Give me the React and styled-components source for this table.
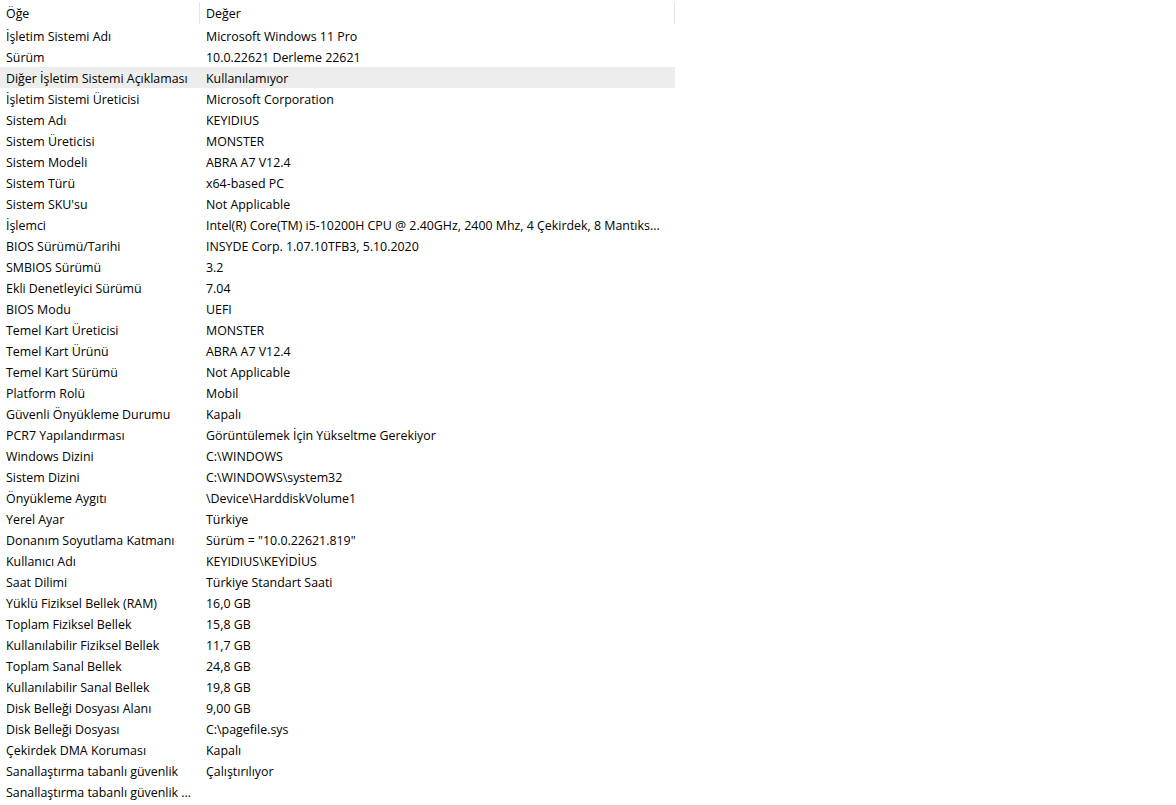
import React from "react";
import styled, { createGlobalStyle } from "styled-components";

const rows = [
  ["İşletim Sistemi Adı", "Microsoft Windows 11 Pro"],
  ["Sürüm", "10.0.22621 Derleme 22621"],
  ["Diğer İşletim Sistemi Açıklaması", "Kullanılamıyor"],
  ["İşletim Sistemi Üreticisi", "Microsoft Corporation"],
  ["Sistem Adı", "KEYIDIUS"],
  ["Sistem Üreticisi", "MONSTER"],
  ["Sistem Modeli", "ABRA A7 V12.4"],
  ["Sistem Türü", "x64-based PC"],
  ["Sistem SKU'su", "Not Applicable"],
  ["İşlemci", "Intel(R) Core(TM) i5-10200H CPU @ 2.40GHz, 2400 Mhz, 4 Çekirdek, 8 Mantıks..."],
  ["BIOS Sürümü/Tarihi", "INSYDE Corp. 1.07.10TFB3, 5.10.2020"],
  ["SMBIOS Sürümü", "3.2"],
  ["Ekli Denetleyici Sürümü", "7.04"],
  ["BIOS Modu", "UEFI"],
  ["Temel Kart Üreticisi", "MONSTER"],
  ["Temel Kart Ürünü", "ABRA A7 V12.4"],
  ["Temel Kart Sürümü", "Not Applicable"],
  ["Platform Rolü", "Mobil"],
  ["Güvenli Önyükleme Durumu", "Kapalı"],
  ["PCR7 Yapılandırması", "Görüntülemek İçin Yükseltme Gerekiyor"],
  ["Windows Dizini", "C:\\WINDOWS"],
  ["Sistem Dizini", "C:\\WINDOWS\\system32"],
  ["Önyükleme Aygıtı", "\\Device\\HarddiskVolume1"],
  ["Yerel Ayar", "Türkiye"],
  ["Donanım Soyutlama Katmanı", "Sürüm = \"10.0.22621.819\""],
  ["Kullanıcı Adı", "KEYIDIUS\\KEYİDİUS"],
  ["Saat Dilimi", "Türkiye Standart Saati"],
  ["Yüklü Fiziksel Bellek (RAM)", "16,0 GB"],
  ["Toplam Fiziksel Bellek", "15,8 GB"],
  ["Kullanılabilir Fiziksel Bellek", "11,7 GB"],
  ["Toplam Sanal Bellek", "24,8 GB"],
  ["Kullanılabilir Sanal Bellek", "19,8 GB"],
  ["Disk Belleği Dosyası Alanı", "9,00 GB"],
  ["Disk Belleği Dosyası", "C:\\pagefile.sys"],
  ["Çekirdek DMA Koruması", "Kapalı"],
  ["Sanallaştırma tabanlı güvenlik", "Çalıştırılıyor"],
  ["Sanallaştırma tabanlı güvenlik ...", ""],
];

const GlobalStyle = createGlobalStyle`
  html, body {
    margin:0;
    padding:0;
    background:#fff;
  }
  body {
    font-family:"Open Sans","Noto Sans",sans-serif;
    font-size:12.4px;
    color:#000;
    overflow:hidden;
  }
`;

const List = styled.div`
  width:675px;
  display:flex;
  flex-direction:column;
`;

const Header = styled.div`
  display:grid;
  grid-template-columns:200px 475px;
  height:25px;
`;

const HeaderCell = styled.div`
  display:flex;
  align-items:center;
  padding:2px 0 0 6px;
  position:relative;
  &::after{
    content:"";
    position:absolute;
    right:0;
    top:2px;
    bottom:1px;
    width:1px;
    background:#e5e5e5;
  }
`;

const Row = styled.div`
  display:grid;
  grid-template-columns:200px 475px;
  height:21px;
  background:${p => (p.selected ? "#ededed" : "transparent")};
`;

const Cell = styled.div`
  display:flex;
  align-items:center;
  padding:2px 0 0 6px;
  white-space:nowrap;
`;

export default function App(){
  return(
    <>
      <GlobalStyle/>
      <List>
        <Header>
          <HeaderCell>Öğe</HeaderCell>
          <HeaderCell>Değer</HeaderCell>
        </Header>
        {rows.map(([name,value],i)=>(
          <Row key={i} selected={i===2}>
            <Cell>{name}</Cell>
            <Cell>{value}</Cell>
          </Row>
        ))}
      </List>
    </>
  );
}
